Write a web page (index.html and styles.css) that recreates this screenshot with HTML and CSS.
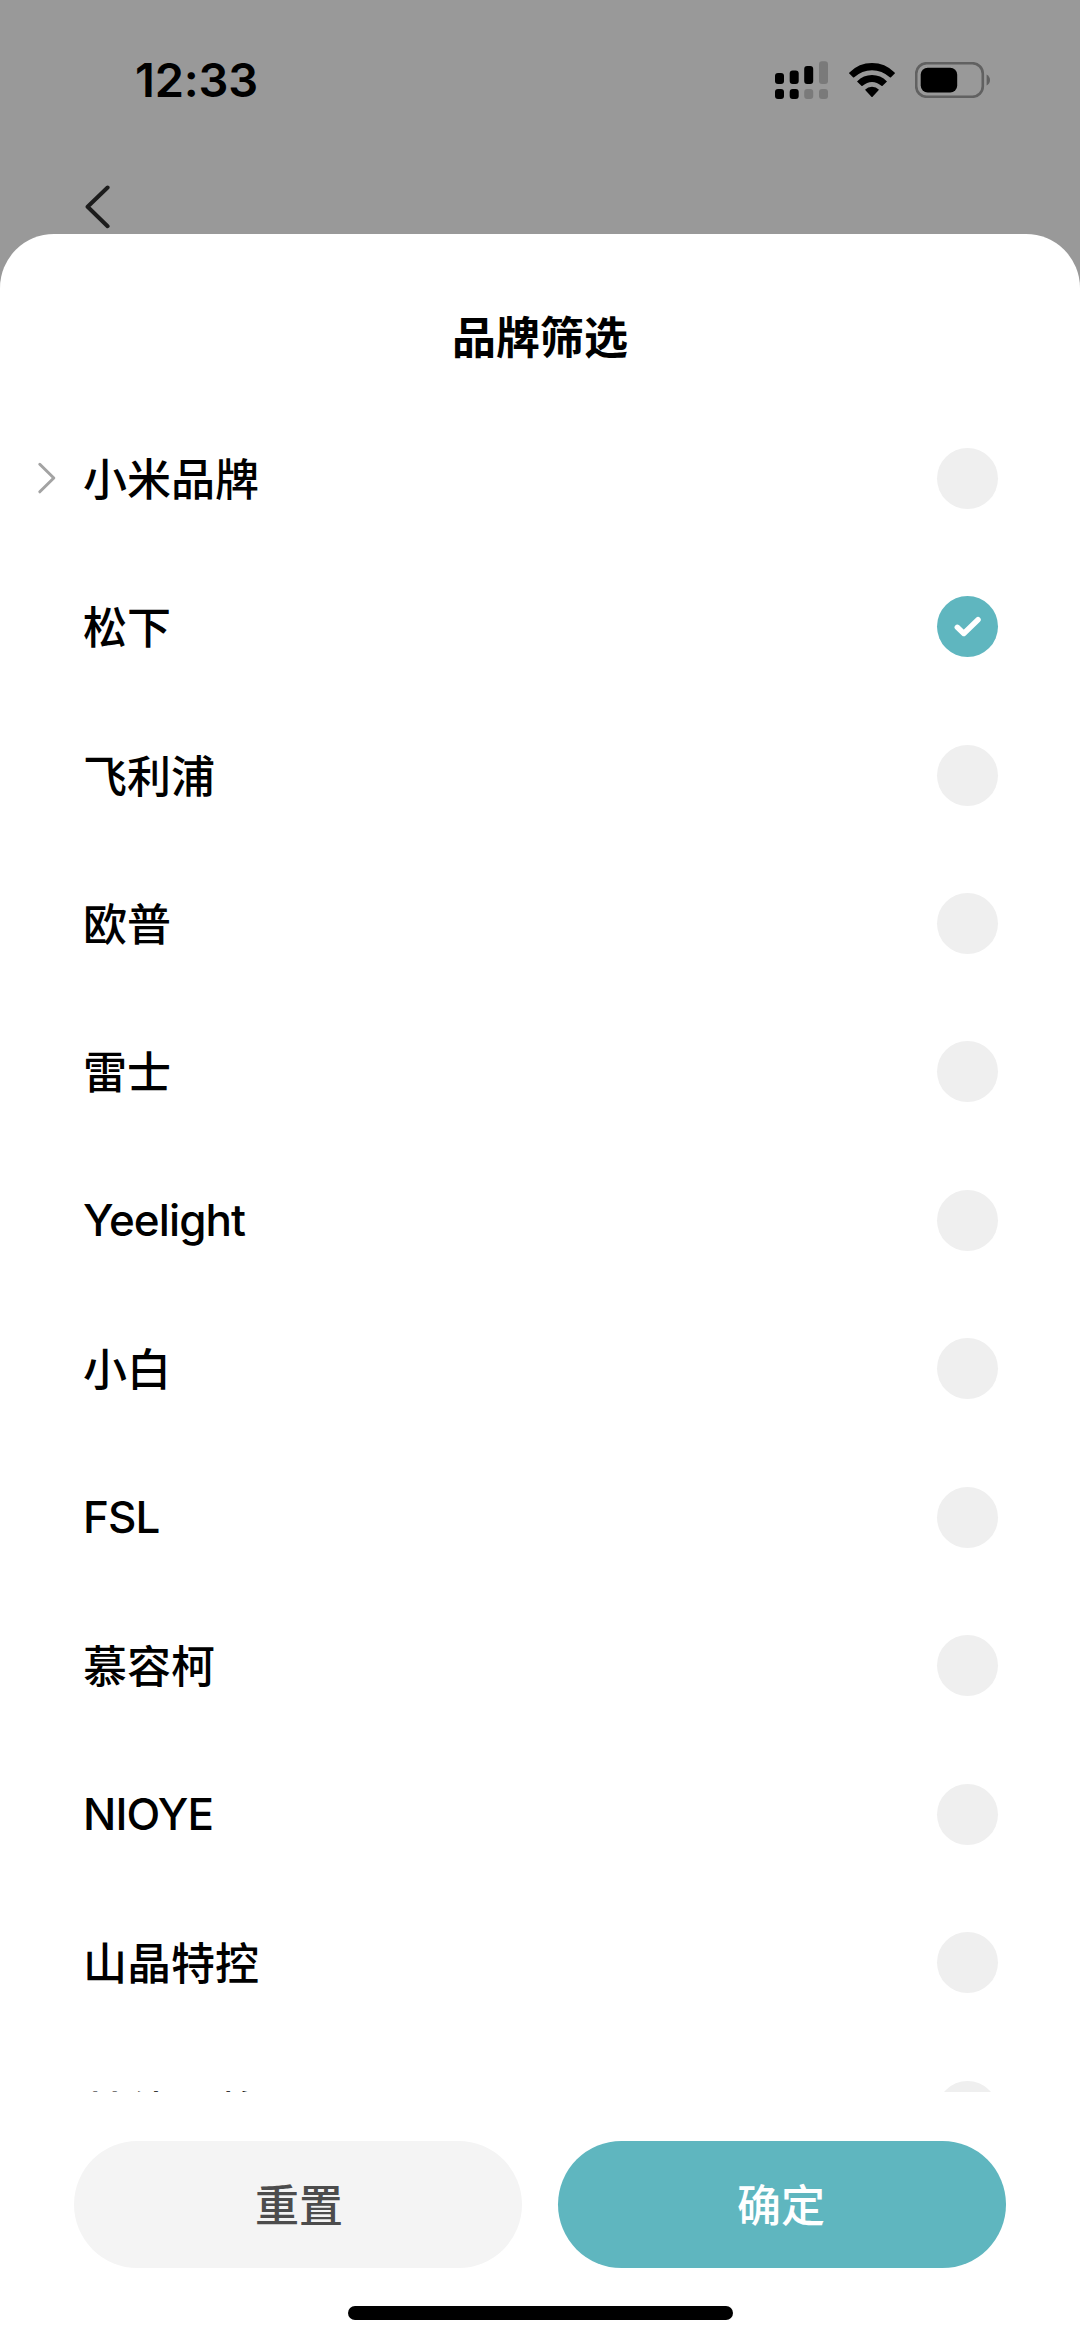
FILE: index.html
```html
<!DOCTYPE html>
<html lang="zh-CN">
<head>
    <meta charset="UTF-8">
    <title>品牌筛选</title>
    <link rel="stylesheet" href="styles.css">
</head>
<body>
    <header class="status-bar">
        <span class="time">12:33</span>
        <div class="status-icons">
            <svg class="signal" width="54" height="38" viewBox="0 0 54 38">
                <rect x="0" y="12" width="9" height="11" rx="3"/>
                <rect x="14.7" y="9.5" width="9" height="13.5" rx="3"/>
                <rect x="29.2" y="5" width="9" height="18" rx="3"/>
                <rect class="dim" x="44" y="0.3" width="9" height="22.7" rx="3"/>
                <rect x="0" y="28" width="9" height="10" rx="3"/>
                <rect x="14.7" y="28" width="9" height="10" rx="3"/>
                <rect class="dim" x="29.2" y="28" width="9" height="10" rx="3"/>
                <rect class="dim" x="44" y="28" width="9" height="10" rx="3"/>
            </svg>
            <svg class="wifi" width="46" height="35" viewBox="0 0 46 35">
                <path d="M0 10.2Q0 9.8 0.4 9.4Q10 0 23 0T45.6 9.4Q46 9.8 46 10.2L42 14.3Q41.4 14.8 40.8 14.3Q33 7.2 23 7.2T5.2 14.3Q4.6 14.8 4 14.3Z"/>
                <path d="M8 18.4Q14.5 12 23 12T38 18.4L33.6 22.8Q33 23.3 32.4 22.8Q28 19 23 19T13.6 22.8Q13 23.3 12.4 22.8Z"/>
                <path d="M16 26.7Q19 23.8 23 23.8T30 26.7L23.6 33.8Q23 34.4 22.4 33.8Z"/>
            </svg>
            <svg class="battery" width="76" height="36" viewBox="0 0 76 36">
                <rect class="shell" x="1.2" y="1.2" width="66.6" height="33.6" rx="10.5"/>
                <rect x="5.7" y="5.7" width="36.5" height="24.8" rx="7"/>
                <path class="cap" d="M71.6 12.5Q75 14.5 75 18T71.6 23.5Z"/>
            </svg>
        </div>
    </header>
    <nav class="nav-bar">
        <svg width="26" height="44" viewBox="0 0 26 44">
            <path d="M22.6 2.5L2.6 21.8L22.6 41.2"/>
        </svg>
    </nav>

    <main class="sheet">
        <h1>品牌筛选</h1>
        <ul class="brands">
            <li>
                <svg class="arrow" width="20" height="32" viewBox="0 0 20 32">
                    <path d="M2.8 2.3L16.8 16L2.8 29.8"/>
                </svg>
                <span>小米品牌</span><i class="radio"></i>
            </li>
            <li>
                <span>松下</span>
                <i class="radio checked">
                    <svg width="28" height="22" viewBox="0 0 28 22">
                        <path d="M3.3 11.3L9.8 17.4L24 3.7"/>
                    </svg>
                </i>
            </li>
            <li><span>飞利浦</span><i class="radio"></i></li>
            <li><span>欧普</span><i class="radio"></i></li>
            <li><span>雷士</span><i class="radio"></i></li>
            <li><span class="latin">Yeelight</span><i class="radio"></i></li>
            <li><span>小白</span><i class="radio"></i></li>
            <li><span class="latin">FSL</span><i class="radio"></i></li>
            <li><span>慕容柯</span><i class="radio"></i></li>
            <li><span class="latin">NIOYE</span><i class="radio"></i></li>
            <li><span>山晶特控</span><i class="radio"></i></li>
            <li><span>其他品牌</span><i class="radio"></i></li>
        </ul>
        <div class="actions">
            <button class="reset">重置</button>
            <button class="confirm">确定</button>
        </div>
        <div class="home-indicator"></div>
    </main>
</body>
</html>
```

FILE: styles.css
```css
* {
    box-sizing: border-box;
}
body {
    margin: 0;
    height: 2342px;
    display: flex;
    flex-direction: column;
    overflow: hidden;
    background-color: #999;
    font-family: Inter, "Noto Sans CJK SC", sans-serif;
    color: #000;
}
.status-bar {
    height: 160px;
    padding: 0 89px 0 135px;
    display: flex;
    justify-content: space-between;
    align-items: center;
}
.time {
    font-size: 47px;
    font-weight: 600;
    line-height: 60px;
    letter-spacing: -0.2px;
}
.status-icons {
    display: flex;
    align-items: center;
    gap: 20px;
}
.signal .dim {
    fill: #7a7a7a;
}
.battery .shell {
    fill: none;
    stroke: #616161;
    stroke-width: 2.6;
}
.battery .cap {
    fill: #616161;
}
.nav-bar {
    height: 74px;
    padding: 25px 0 0 85px;
}
.nav-bar path {
    fill: none;
    stroke: #1c1c1c;
    stroke-width: 4;
    stroke-linecap: round;
    stroke-linejoin: round;
}
.sheet {
    flex: 1;
    display: flex;
    flex-direction: column;
    background-color: #fff;
    border-radius: 54px 54px 0 0;
}
h1 {
    margin: 0;
    padding-top: 72px;
    height: 170px;
    font-size: 44px;
    font-weight: 700;
    line-height: 64px;
    text-align: center;
}
.brands {
    list-style: none;
    margin: 0;
    padding: 0;
    height: 1688px;
    overflow: hidden;
}
.brands li {
    position: relative;
    height: 148.45px;
    padding: 0 82px 0 83px;
    display: flex;
    align-items: center;
    justify-content: space-between;
    font-size: 44px;
    font-weight: 500;
    line-height: 64px;
}
.brands span {
    padding-top: 3px;
}
.brands .latin {
    padding-top: 0;
    letter-spacing: -0.9px;
}
.arrow {
    position: absolute;
    left: 37px;
    top: 58px;
    fill: none;
    stroke: #a3a3a3;
    stroke-width: 3;
    stroke-linecap: round;
    stroke-linejoin: round;
}
.radio {
    width: 61px;
    height: 61px;
    display: flex;
    align-items: center;
    justify-content: center;
    border-radius: 50%;
    background-color: #efefef;
}
.radio.checked {
    background-color: #5fb6bf;
}
.radio path {
    fill: none;
    stroke: #fff;
    stroke-width: 5.5;
    stroke-linecap: round;
    stroke-linejoin: round;
}
.actions {
    display: flex;
    gap: 36px;
    padding: 49px 74px 0;
}
.actions button {
    flex: 1;
    height: 127px;
    padding: 3px 0 0;
    border: none;
    border-radius: 64px;
    font-family: inherit;
    font-size: 44px;
    font-weight: 500;
    line-height: 64px;
}
.actions .reset {
    padding-left: 2px;
    background-color: #f4f4f4;
    color: #4c4c4c;
}
.actions .confirm {
    padding-right: 2px;
    background-color: #5fb6bf;
    color: #fff;
}
.home-indicator {
    width: 385px;
    height: 14px;
    margin: 38px auto 0;
    border-radius: 7px;
    background-color: #000;
}
```
